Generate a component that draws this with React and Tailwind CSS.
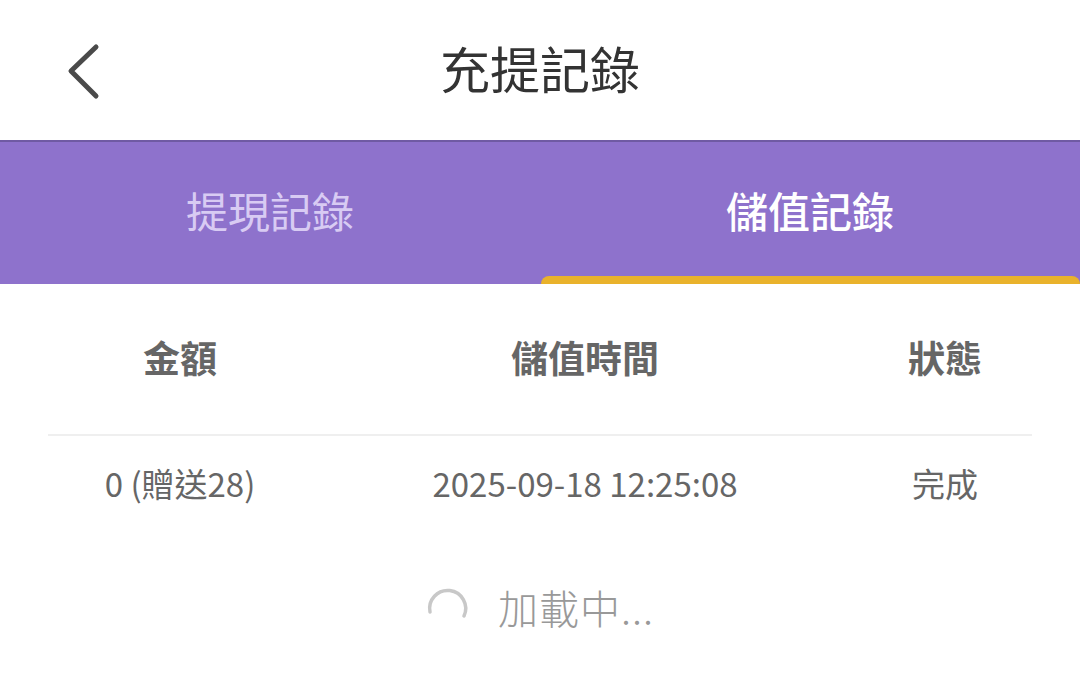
import { useState } from "react";

const font = { fontFamily: '"Noto Sans CJK TC", "Noto Sans", Roboto, sans-serif' };

const rows = [{ amount: "0 (贈送28)", time: "2025-09-18 12:25:08", status: "完成" }];

const App = () => {
  const [tab, setTab] = useState(1);

  return (
    <div className="h-[699px] w-[1080px] overflow-hidden bg-white" style={font}>
      {/* Header */}
      <div className="relative flex h-[140px] items-center justify-center">
        <button className="absolute top-[38px] left-[58px] p-1">
          <svg width="40" height="60" viewBox="0 0 40 60" fill="none">
            <path
              d="M34 5 L9 29 L34 54"
              stroke="#4a4a4a"
              strokeWidth="5"
              strokeLinecap="round"
              strokeLinejoin="round"
            />
          </svg>
        </button>
        <h1 className="mb-[6px] text-[50px] leading-none font-normal text-[#333]">充提記錄</h1>
      </div>

      {/* Tabs */}
      <div className="flex h-[144px] border-t-2 border-[#6f5aa3] bg-[#8e72cc]">
        {["提現記錄", "儲值記錄"].map((label, i) => (
          <div
            key={label}
            onClick={() => setTab(i)}
            className="relative flex flex-1 cursor-pointer items-center justify-center pb-[6px]"
          >
            <span
              className={`text-[42px] leading-none ${
                tab === i ? "font-medium text-white" : "font-normal text-[#d8cbf3]"
              }`}
            >
              {label}
            </span>
            {tab === i && (
              <div className="absolute right-0 bottom-0 left-px h-[8px] rounded-t-full bg-[#e9b22b]" />
            )}
          </div>
        ))}
      </div>

      {/* Table */}
      <div className="px-[48px]">
        <div className="flex h-[152px] items-center border-b-2 border-[#efefef] pb-[2px] text-[37px] font-bold text-[#666]">
          <div className="w-[264px] text-center">金額</div>
          <div className="w-[546px] text-center">儲值時間</div>
          <div className="w-[174px] text-center">狀態</div>
        </div>
        {rows.map((r) => (
          <div key={r.time} className="flex h-[98px] items-center pb-[2px] text-[33px] text-[#666]">
            <div className="w-[264px] text-center">{r.amount}</div>
            <div className="w-[546px] text-center">{r.time}</div>
            <div className="w-[174px] text-center">{r.status}</div>
          </div>
        ))}
      </div>

      {/* Loading */}
      <div className="mt-[50px] flex items-center justify-center gap-[28px]">
        <svg width="44" height="44" viewBox="0 0 44 44" fill="none" className="mb-[2px]">
          <path
            d="M4 28 A18 18 0 1 1 38 32"
            stroke="#c8c8c8"
            strokeWidth="3.5"
            strokeLinecap="round"
          />
        </svg>
        <span className="text-[40px] leading-none font-light tracking-[1px] text-[#999]">加載中...</span>
      </div>
    </div>
  );
};

export default App;
